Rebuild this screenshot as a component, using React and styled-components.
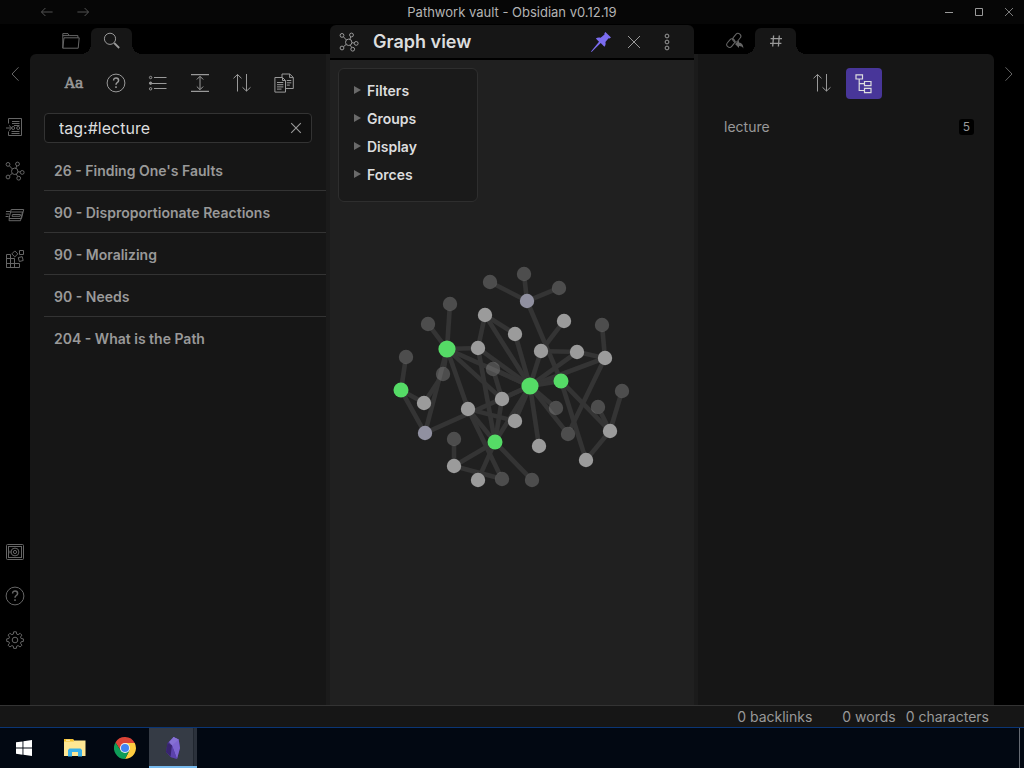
import React, { useState } from 'react';
import styled, { createGlobalStyle, css, ThemeProvider } from 'styled-components';

const theme = {
    bg: '#161616',
    bgDark: '#060606',
    bgPane: '#202020',
    border: '#333333',
    handle: '#1b1b1b',
    text: '#dcddde',
    muted: '#999999',
    faint: '#666666',
    accent: '#7b6cf0',
    accentBg: '#483699',
};

const GlobalStyle = createGlobalStyle`
  * {
    box-sizing: border-box;
  }

  body {
    margin: 0;
    background: #000;
    font-family: Inter, "Open Sans", sans-serif;
    font-size: 14px;
  }

  button, input {
    font: inherit;
  }
`;

const Window = styled.div`
  display: flex;
  flex-direction: column;
  min-height: 100vh;
  background: #000;
  color: ${props => props.theme.muted};
`;

const IconButton = styled.button`
  display: flex;
  align-items: center;
  justify-content: center;
  flex: none;
  width: ${props => props.$width || 30}px;
  height: ${props => props.$height || 30}px;
  padding: 0;
  border: 0;
  border-radius: 4px;
  background: none;
  color: ${props => props.theme.muted};

  ${props => props.$faint && css`
    color: ${props.theme.faint};
  `}

  ${props => props.$active && css`
    background: ${props.theme.accentBg};
    color: ${props.theme.text};
  `}
`;

const Svg = styled.svg`
  display: block;
  fill: none;
  stroke: currentColor;
`;

/* title bar */

const TitleBar = styled.header`
  display: grid;
  grid-template-columns: 1fr auto 1fr;
  align-items: center;
  height: 24px;
  background: ${props => props.theme.bgDark};
`;

const Title = styled.h1`
  margin: 0;
  font-size: 13px;
  font-weight: 400;
  color: #b4b4b4;
`;

const HistoryButtons = styled.nav`
  display: flex;
  gap: 6px;
  padding-left: 32px;
`;

const WindowButtons = styled.div`
  display: flex;
  justify-content: flex-end;
`;

/* workspace */

const Workspace = styled.div`
  display: grid;
  grid-template-columns: 30px 300px 1fr 300px 30px;
  flex: 1;
`;

const Ribbon = styled.nav`
  display: flex;
  flex-direction: column;
  align-items: center;
  gap: 14px;
  padding: 35px 0 50px;
`;

const RibbonGroup = styled.div`
  display: flex;
  flex-direction: column;
  gap: 14px;
  padding-top: 9px;
  
  &:last-child {
    margin-top: auto;
  }
`;

const Dock = styled.aside`
  display: flex;
  flex-direction: column;
  min-width: 0;
`;

const DockTabs = styled.div`
  display: flex;
  align-items: flex-end;
  height: 30px;
  padding-left: 20px;
`;

const DockTab = styled(IconButton)`
  position: relative;
  width: 41px;
  height: 26px;
  border-radius: 6px 6px 0 0;

  ${props => props.$selected && css`
    background: ${props.theme.bg};

    &::before,
    &::after {
      content: '';
      position: absolute;
      bottom: 0;
      width: 10px;
      height: 10px;
    }

    &::before {
      right: 100%;
      background: radial-gradient(circle at 0 0, transparent 10px, ${props.theme.bg} 10px);
    }

    &::after {
      left: 100%;
      background: radial-gradient(circle at 100% 0, transparent 10px, ${props.theme.bg} 10px);
    }
  `}
`;

const DockBody = styled.div`
  flex: 1;
  background: ${props => props.theme.bg};

  ${props => props.$side === 'left' ? css`
    padding: 14px 0 0 14px;
    border-right: 4px solid ${props.theme.handle};
    border-radius: 6px 0 0 0;
  ` : css`
    padding: 14px 20px 0 26px;
    border-left: 4px solid ${props.theme.handle};
    border-radius: 0 6px 0 0;
  `}
`;

const NavButtons = styled.div`
  display: flex;
  justify-content: center;
  gap: 6px;
  padding-right: 12px;
`;

const LetterCase = styled.span`
  font-family: "DejaVu Serif", serif;
  font-size: 14px;
  -webkit-text-stroke: 0.6px;
`;

const SearchForm = styled.form`
  display: flex;
  align-items: center;
  height: 30px;
  margin: 15px 14px 6px 0;
  border: 1px solid ${props => props.theme.border};
  border-radius: 4px;
  background: #0f0f0f;
`;

const SearchInput = styled.input`
  flex: 1;
  min-width: 0;
  padding: 0 0 0 14px;
  border: 0;
  outline: 0;
  background: none;
  font-size: 16px;
  color: ${props => props.theme.text};
`;

const Results = styled.ul`
  margin: 0;
  padding: 0;
  list-style: none;
`;

const Result = styled.li`
  & + & {
    border-top: 1px solid ${props => props.theme.border};
  }
`;

const ResultLink = styled.a`
  display: block;
  padding: 11px 10px 9px;
  line-height: 21px;
  font-weight: 600;
  color: ${props => props.theme.muted};
  text-decoration: none;
`;

const TagRow = styled.a`
  display: flex;
  align-items: center;
  justify-content: space-between;
  margin-top: 18px;
  line-height: 20px;
  color: ${props => props.theme.muted};
  text-decoration: none;
`;

const TagCount = styled.span`
  padding: 0 4px;
  border-radius: 3px;
  background: #000;
  font-size: 12px;
  line-height: 16px;
`;

/* graph pane */

const Pane = styled.main`
  display: flex;
  flex-direction: column;
  min-width: 0;
  padding-top: 1px;
`;

const PaneHeader = styled.header`
  display: flex;
  align-items: center;
  height: 35px;
  padding: 0 12px 0 9px;
  border-bottom: 2px solid #000;
  border-radius: 6px 6px 0 0;
  background: ${props => props.theme.bg};
`;

const PaneTitle = styled.h2`
  flex: 1;
  margin: 0 0 0 14px;
  font-size: 18px;
  font-weight: 600;
  line-height: 24px;
  color: ${props => props.theme.text};
`;

const PaneActions = styled.div`
  display: flex;
  gap: 3px;
`;

const PaneBody = styled.div`
  position: relative;
  display: flex;
  flex: 1;
  background: ${props => props.theme.bgPane};
`;

const GraphSvg = styled.svg`
  flex: 1;
  min-width: 0;
`;

const GraphControls = styled.div`
  position: absolute;
  top: 8px;
  left: 8px;
  width: 140px;
  padding: 7px 14px 13px;
  border: 1px solid #2e2e2e;
  border-radius: 6px;
  background: #1a1a1a;
`;

const ControlToggle = styled.button`
  display: flex;
  align-items: center;
  gap: 6px;
  width: 100%;
  height: 28px;
  padding: 0;
  border: 0;
  background: none;
  font-weight: 600;
  color: ${props => props.theme.text};
`;

/* bottom bars */

const StatusBar = styled.footer`
  display: flex;
  justify-content: flex-end;
  gap: 10px;
  height: 22px;
  padding-right: 35px;
  border-top: 1px solid ${props => props.theme.border};
  background: ${props => props.theme.bg};
  line-height: 22px;
`;

const Backlinks = styled.span`
  margin-right: 20px;
`;

const Taskbar = styled.nav`
  display: flex;
  height: 41px;
  padding-right: 4px;
  border-top: 1px solid #0a3575;
  background: #020812;
`;

const TaskButton = styled.button`
  display: flex;
  align-items: center;
  justify-content: center;
  width: ${props => props.$width || 48}px;
  padding: 0;
  border: 0;
  background: none;

  ${props => props.$active && css`
    padding-top: 2px;
    border-bottom: 2px solid #76b9ed;
    background: linear-gradient(to right, #353b45 44px, #20262f 44px, #20262f 45px, #2b313b 45px);
  `}
`;

const ShowDesktop = styled.button`
  width: 1px;
  margin-left: auto;
  padding: 0;
  border: 0;
  background: #666b73;
`;

const Icon = ({ size=20, strokeWidth=1, children }) => (
    <Svg width={size} height={size} viewBox="0 0 20 20" strokeWidth={strokeWidth} aria-hidden="true">
        {children}
    </Svg>
);

const GraphIcon = () => (
    <Icon>
        <circle cx="9.7" cy="10.3" r="3.2" />
        <circle cx="3" cy="3.4" r="1.9" />
        <circle cx="12.5" cy="3" r="1.9" />
        <circle cx="17.2" cy="11.4" r="1.9" />
        <circle cx="13.7" cy="17.2" r="1.9" />
        <circle cx="3" cy="16" r="1.9" />
        <path d="M4.4 4.8l3 3.2M11.8 4.9l-1 2.4M12.9 10.7l2.3.4M11.3 13.1l1.4 2.4M7.2 12.4l-2.7 2.3" />
    </Icon>
);

const SortIcon = () => (
    <Icon>
        <path d="M5.5 18.5v-17M1.5 5.3l4-3.8 4 3.8M14.5 1v17M10.5 14.3l4 3.8 4-3.8" />
    </Icon>
);

const HelpIcon = () => (
    <Icon>
        <circle cx="10" cy="10" r="8.9" />
        <path d="M7.6 7.4c0-3.4 5-3.3 5 0 0 2.2-2.6 2-2.6 4.3M10 13.2v1.7" strokeWidth="1.5" />
    </Icon>
);

const CrossIcon = ({ size, strokeWidth }) => (
    <Icon size={size} strokeWidth={strokeWidth}>
        <path d="M4 4l12 12M16 4L4 16" />
    </Icon>
);

const ribbonTop = [
    { label: 'Open quick switcher', icon: (
        <Icon>
            <path d="M3.5 6.5v-5h13v17h-13v-4" />
            <path d="M7 4.5h7.500M7 6.500h7.500M9 8.500h5.500M6.500 14.500h8M6.500 16.500h8" />
            <circle cx="8.2" cy="11" r="1.5" />
            <circle cx="13.2" cy="11" r="1.5" />
            <path d="M1 11h5.500M4 8.400L6.700 11 4 13.600" />
        </Icon>
    ) },
    { label: 'Open graph view', icon: <GraphIcon /> },
    { label: 'Insert template', icon: (
        <Icon>
            <path d="M6.2 4.5h12.5l-2.2 9H4zM5.5 7h12.4" />
            <path d="M7.5 9.5h8l-.4 1.8H7zM4.3 13.7l-.3 2h11.5l2-8.7" />
            <path d="M1 6.5h4M.8 9h3.6M.6 11.5h3" />
        </Icon>
    ) },
    { label: 'Blocks', icon: (
        <Icon>
            <path d="M1.5 5.5h4v13h-4zM1.5 9.5h8v9M1.5 14.5h13v4h-13M9.5 14.5v4M5.5 9.5v9" />
            <path d="M9.8 1.9l3 3-3 3-3-3zM14.5 1.5h4v4h-4zM13.3 8.6l3.9-1 1 3.9-3.9 1z" />
        </Icon>
    ) },
];

const ribbonBottom = [
    { label: 'Open another vault', icon: (
        <Icon>
            <rect x="1.5" y="2.5" width="17" height="15" rx="1" />
            <rect x="3.5" y="4.5" width="13" height="11" />
            <circle cx="10" cy="10" r="3.9" />
            <circle cx="10" cy="10" r="1.6" />
            <path d="M5 8.6v2.8" />
        </Icon>
    ) },
    { label: 'Help', icon: <HelpIcon /> },
    { label: 'Settings', icon: (
        <Icon>
            <circle cx="10" cy="10" r="2.8" />
            <path d="M8.7 1.8h2.6l.4 2.3 1.4.6 2-1.4 1.8 1.8-1.4 2 .6 1.4 2.3.4v2.5l-2.3.4-.6 1.4 1.4 2-1.8 1.8-2-1.4-1.4.6-.4 2.2H8.7l-.4-2.2-1.4-.6-2 1.4-1.8-1.8 1.4-2-.6-1.4-2.2-.4V8.9l2.2-.4.6-1.4-1.4-2 1.8-1.8 2 1.4 1.4-.6z" />
        </Icon>
    ) },
];

const searchActions = [
    { label: 'Match case', icon: <LetterCase>Aa</LetterCase> },
    { label: 'Explain search term', icon: <HelpIcon /> },
    { label: 'Collapse results', icon: (
        <Icon>
            <circle cx="2.6" cy="4.5" r="1.2" />
            <circle cx="2.6" cy="10.2" r="1.2" fill="currentColor" />
            <circle cx="2.6" cy="15.8" r="1.2" />
            <path d="M6 4.5h12.5M4 10.5h14.5M6 15.5h12.5" />
        </Icon>
    ) },
    { label: 'Show more context', icon: (
        <Icon>
            <path d="M1 1.6h18M1 18.4h18" strokeWidth="1.4" />
            <path d="M10 3.5v13M6.8 6.5L10 3.3l3.2 3.2M6.8 13.5l3.2 3.2 3.2-3.2" />
        </Icon>
    ) },
    { label: 'Change sort order', icon: <SortIcon /> },
    { label: 'Copy search results', icon: (
        <Icon>
            <path d="M.9 4.5h7.6l3 3v11.6H.9zM8.5 4.5v3h3" />
            <path d="M8 4V1h7.8l3.5 3.4v11.1h-7.6M15.6 1v3.6h3.6" />
            <path d="M3 9.5h6.3M3 11.7h6.3M3 13.9h6.3M3 16.1h4.5M12.8 7.5h4.5M12.8 9.8h4.5M12.8 12.1h3" />
        </Icon>
    ) },
];

const results = [
    "26 - Finding One's Faults",
    '90 - Disproportionate Reactions',
    '90 - Moralizing',
    '90 - Needs',
    '204 - What is the Path',
];

// id: [x, y, kind]
const nodes = {
    a: [490, 282, 'dim'],
    b: [524, 274, 'dim'],
    c: [559, 288, 'dim'],
    d: [527, 301, 'file'],
    e: [450, 304, 'dim'],
    f: [428, 324, 'dim'],
    g: [485, 315, 'note'],
    h: [515, 334, 'note'],
    i: [564, 321, 'note'],
    j: [602, 325, 'dim'],
    k: [447, 349, 'hub'],
    l: [478, 348, 'note'],
    m: [541, 351, 'note'],
    n: [577, 352, 'note'],
    o: [605, 358, 'note'],
    p: [406, 357, 'dim'],
    q: [443, 374, 'dim'],
    r: [493, 369, 'dim'],
    s: [401, 390, 'tag'],
    t: [424, 403, 'note'],
    u: [530, 386, 'hub'],
    v: [561, 381, 'tag'],
    w: [622, 391, 'dim'],
    x: [598, 407, 'dim'],
    y: [556, 408, 'dim'],
    z: [502, 399, 'note'],
    A: [468, 409, 'note'],
    B: [515, 421, 'note'],
    C: [425, 433, 'file'],
    D: [568, 434, 'dim'],
    E: [610, 431, 'note'],
    F: [454, 439, 'dim'],
    G: [495, 442, 'tag'],
    H: [539, 446, 'note'],
    I: [586, 460, 'note'],
    J: [454, 466, 'note'],
    K: [478, 480, 'note'],
    L: [502, 479, 'dim'],
    M: [532, 480, 'dim'],
};

const links = (
    'da db dc dv ke kf kl ku kz kA kC kq qt gl gh gu hu lu lG mi mu mn no nu oj ou oD ' +
    'uv vI vE Ew Ex EI uy uD uH uB uz uG zG rz ru AB AG AL Cu GJ GK GM JF JL sp st sC'
).split(' ');

const nodeStyles = {
    dim: { r: 7.2, fill: '#999999', fillOpacity: 0.38 },
    note: { r: 7.2, fill: '#9b9b9b' },
    file: { r: 7.2, fill: '#9090a0' },
    tag: { r: 7.5, fill: '#55db66' },
    hub: { r: 8.6, fill: '#55db66' },
};

// links stop at the rim of a node, so they don't show through the dim ones
const getLine = (from, to) => {
    let [ x1, y1 ] = nodes[from];
    let [ x2, y2 ] = nodes[to];
    let trim = 6.5 / Math.hypot(x2 - x1, y2 - y1);
    let dx = (x2 - x1) * trim;
    let dy = (y2 - y1) * trim;

    return { x1: x1 + dx, y1: y1 + dy, x2: x2 - dx, y2: y2 - dy };
};

const Graph = () => (
    <GraphSvg viewBox="330 60 364 645" role="img" aria-label="Graph of linked notes">
        <g stroke="#343434" strokeWidth="4.6">
            {links.map(([ from, to ]) =>
                <line key={from + to} {...getLine(from, to)} />
            )}
        </g>
        {Object.entries(nodes).map(([ id, [ x, y, kind ] ]) =>
            <circle key={id} cx={x} cy={y} {...nodeStyles[kind]} />
        )}
    </GraphSvg>
);

const SearchBox = () => {
    let [ query, setQuery ] = useState('tag:#lecture');

    return (
        <SearchForm onSubmit={e => e.preventDefault()}>
            <SearchInput
                type="text"
                aria-label="Search"
                value={query}
                onChange={e => setQuery(e.target.value)}
            />
            <IconButton type="button" $height={28} aria-label="Clear search" onClick={() => setQuery('')}>
                <CrossIcon size={16} strokeWidth={1.4} />
            </IconButton>
        </SearchForm>
    );
};

const LeftDock = () => (
    <Dock>
        <DockTabs>
            <DockTab $faint aria-label="File explorer">
                <Icon>
                    <path d="M1.8 17.2V2.6H7l1.3 2h8.6v2.2M1.8 17.2L3 6.8h15.2l-1 10.4zM1.8 4.6h6.5" />
                </Icon>
            </DockTab>
            <DockTab $selected aria-label="Search">
                <Icon>
                    <circle cx="8" cy="7.8" r="5.6" />
                    <path d="M12.2 12l5 5" strokeWidth="1.8" />
                </Icon>
            </DockTab>
        </DockTabs>
        <DockBody $side="left">
            <NavButtons>
                {searchActions.map(({ label, icon }) =>
                    <IconButton key={label} $width={36} aria-label={label}>{icon}</IconButton>
                )}
            </NavButtons>
            <SearchBox />
            <Results>
                {results.map(name =>
                    <Result key={name}>
                        <ResultLink href="#">{name}</ResultLink>
                    </Result>
                )}
            </Results>
        </DockBody>
    </Dock>
);

const GraphPane = () => (
    <Pane>
        <PaneHeader>
            <GraphIcon />
            <PaneTitle>Graph view</PaneTitle>
            <PaneActions>
                <IconButton aria-label="Unpin">
                    <Icon>
                        <path
                            d="M14.4 0L20 5.6l-1.6.9-.8-.2-3.2 3.6c.5 1.7.2 3.5-1 4.8l-3.7-3.6L.6 20l-.6-.6 8-9.6-3.2-3.2c1.5-1.2 3.2-1.4 4.8-.8l3.9-3.3-.1-1.2z"
                            fill={theme.accent}
                            stroke="none"
                        />
                    </Icon>
                </IconButton>
                <IconButton aria-label="Close">
                    <CrossIcon />
                </IconButton>
                <IconButton aria-label="More options">
                    <Icon>
                        <circle cx="10" cy="4" r="1.9" />
                        <circle cx="10" cy="10" r="1.9" />
                        <circle cx="10" cy="16" r="1.9" />
                    </Icon>
                </IconButton>
            </PaneActions>
        </PaneHeader>
        <PaneBody>
            <Graph />
            <GraphControls>
                {[ 'Filters', 'Groups', 'Display', 'Forces' ].map(name =>
                    <ControlToggle key={name} aria-expanded="false">
                        <svg width="8" height="8" viewBox="0 0 8 8" aria-hidden="true">
                            <path d="M1 0l7 4-7 4z" fill="#6a6a6a" />
                        </svg>
                        {name}
                    </ControlToggle>
                )}
            </GraphControls>
        </PaneBody>
    </Pane>
);

const RightDock = () => (
    <Dock>
        <DockTabs>
            <DockTab $faint aria-label="Backlinks">
                <Icon>
                    <rect x="9" y="2" width="5.6" height="9.4" rx="2.8" transform="rotate(40 11.8 6.7)" />
                    <rect x="3" y="7.4" width="5.6" height="9.4" rx="2.8" transform="rotate(40 5.8 12.1)" />
                    <path d="M10 13l4-3.6v2.2c2.8.2 4.4 2.4 4.4 6-1-1.8-2.4-2.5-4.4-2.5v2z" fill="currentColor" stroke="none" />
                </Icon>
            </DockTab>
            <DockTab $selected aria-label="Tags">
                <Icon strokeWidth={1.3}>
                    <path d="M7.6 4.5l-.9 11M13.3 4.5l-.9 11M4.6 7.7H16M4 12.3h11.4" />
                </Icon>
            </DockTab>
        </DockTabs>
        <DockBody $side="right">
            <NavButtons>
                <IconButton $width={36} aria-label="Change sort order"><SortIcon /></IconButton>
                <IconButton $width={36} $height={31} $active aria-label="Show nested tags">
                    <Icon strokeWidth={1.2}>
                        <path d="M2 .8h6.5V5H2zM10.5 7.5H17v4.2h-6.5zM10.500 14.400H17v4.200h-6.500zM5.2 5v11.5h5.3M5.2 9.6h5.3" />
                    </Icon>
                </IconButton>
            </NavButtons>
            <TagRow href="#">
                lecture
                <TagCount>5</TagCount>
            </TagRow>
        </DockBody>
    </Dock>
);

const TaskIcons = () => (
    <>
        <TaskButton aria-label="Start">
            <svg width="16" height="16" viewBox="0 0 16 16" fill="#fff" aria-hidden="true">
                <path d="M0 2.3l6.5-.9v6.2H0zM7.4 1.2L16 0v7.6H7.400zM0 8.500h6.500v6.200L0 13.800zM7.400 8.500H16V16l-8.600-1.200z" />
            </svg>
        </TaskButton>
        <TaskButton $width={53} aria-label="File Explorer">
            <svg width="22" height="20" viewBox="0 0 22 20" aria-hidden="true">
                <path d="M0 1h9l1 1.5h11.5V18H0z" fill="#ffe793" />
                <path d="M0 1h9l1 2.5H0z" fill="#f6c12d" />
                <path d="M2 1.7h4v1H2z" fill="#fff6d2" />
                <path d="M4 18.5V12l1.500-1.500h11L18 12v6.500h-4V14H8v4.500z" fill="#3bb1e8" />
            </svg>
        </TaskButton>
        <TaskButton aria-label="Chrome">
            <svg width="22" height="22" viewBox="0 0 48 48" aria-hidden="true">
                <path d="M24 13h21.3A24 24 0 0 0 3.2 12l11.3 17.5z" fill="#db4437" />
                <path d="M33.5 29.5L24 48A24 24 0 0 0 45.3 13H24z" fill="#ffcd40" />
                <path d="M14.5 29.5L3.2 12A24 24 0 0 0 24 48l9.5-18.5z" fill="#0f9d58" />
                <circle cx="24" cy="24" r="11" fill="#f1f1f1" />
                <circle cx="24" cy="24" r="8.8" fill="#4285f4" />
            </svg>
        </TaskButton>
        <TaskButton $active aria-label="Obsidian">
            <svg width="16" height="24" viewBox="0 0 16 24" aria-hidden="true">
                <path d="M8.5 1l5.2 2.5L15 12l-3 11-6.5-2L1 16l1.5-9z" fill="#4b3590" />
                <path d="M8.5 1l5.2 2.5L15 12l-3 11-5-13.5z" fill="#7d64d0" />
                <path d="M8.5 1l5.2 2.5L7 9.5 4 6z" fill="#8570d4" />
                <path d="M2.5 7L7 9.5 6 20.5 1 16z" fill="#38246f" />
                <path d="M7 9.5L12 23l-6.500-2z" fill="#5b42ab" />
            </svg>
        </TaskButton>
    </>
);

const App = () => (
    <ThemeProvider theme={theme}>
        <GlobalStyle />
        <Window>
            <TitleBar>
                <HistoryButtons>
                    <IconButton $faint $height={24} aria-label="Back">
                        <Icon size={16}><path d="M17 10H3.5M8 5l-5 5 5 5" /></Icon>
                    </IconButton>
                    <IconButton $faint $height={24} aria-label="Forward">
                        <Icon size={16}><path d="M3 10h13.5M12 5l5 5-5 5" /></Icon>
                    </IconButton>
                </HistoryButtons>
                <Title>Pathwork vault - Obsidian v0.12.19</Title>
                <WindowButtons>
                    <IconButton $height={24} aria-label="Minimize">
                        <Icon><path d="M6 10.5h8" /></Icon>
                    </IconButton>
                    <IconButton $height={24} aria-label="Maximize">
                        <Icon><path d="M6.5 6.5h7v7h-7z" /></Icon>
                    </IconButton>
                    <IconButton $height={24} aria-label="Close window">
                        <Icon strokeWidth={0.8}><path d="M6 6l8 8M14 6l-8 8" /></Icon>
                    </IconButton>
                </WindowButtons>
            </TitleBar>
            <Workspace>
                <Ribbon>
                    <IconButton $faint aria-label="Collapse left sidebar">
                        <Icon><path d="M13.5 3.3L7 10l6.5 6.7" /></Icon>
                    </IconButton>
                    <RibbonGroup>
                        {ribbonTop.map(({ label, icon }) =>
                            <IconButton key={label} $faint aria-label={label}>{icon}</IconButton>
                        )}
                    </RibbonGroup>
                    <RibbonGroup>
                        {ribbonBottom.map(({ label, icon }) =>
                            <IconButton key={label} $faint aria-label={label}>{icon}</IconButton>
                        )}
                    </RibbonGroup>
                </Ribbon>
                <LeftDock />
                <GraphPane />
                <RightDock />
                <Ribbon>
                    <IconButton $faint aria-label="Collapse right sidebar">
                        <Icon><path d="M6.5 3.3L13 10l-6.5 6.7" /></Icon>
                    </IconButton>
                </Ribbon>
            </Workspace>
            <StatusBar>
                <Backlinks>0 backlinks</Backlinks>
                <span>0 words</span>
                <span>0 characters</span>
            </StatusBar>
            <Taskbar>
                <TaskIcons />
                <ShowDesktop aria-label="Show desktop" />
            </Taskbar>
        </Window>
    </ThemeProvider>
);

export default App;
